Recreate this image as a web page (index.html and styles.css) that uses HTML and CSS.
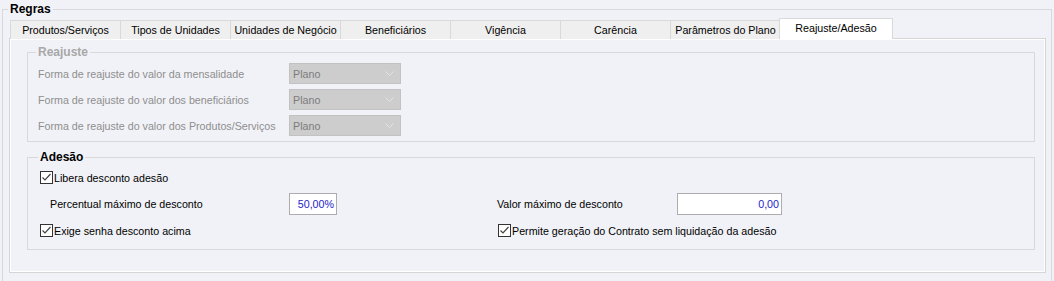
FILE: index.html
```html
<!DOCTYPE html>
<html lang="pt">
<head>
<meta charset="utf-8">
<title>Regras</title>
<link rel="stylesheet" href="styles.css">
</head>
<body>
<fieldset class="group outer">
  <legend class="legend">Regras</legend>
  <div class="tabs">
    <div class="tab">Produtos/Serviços</div>
    <div class="tab">Tipos de Unidades</div>
    <div class="tab">Unidades de Negócio</div>
    <div class="tab">Beneficiários</div>
    <div class="tab">Vigência</div>
    <div class="tab">Carência</div>
    <div class="tab">Parâmetros do Plano</div>
    <div class="tab tab-active">Reajuste/Adesão</div>
  </div>
  <div class="panel">
    <fieldset class="group reajuste">
      <legend class="legend">Reajuste</legend>
      <div class="row">
        <span class="label-col">Forma de reajuste do valor da mensalidade</span>
        <div class="combo"><span>Plano</span><svg class="chev" width="9" height="6" viewBox="0 0 9 6"><path d="M0.5 0.5 L4.5 4.5 L8.5 0.5" fill="none" stroke="#e4e4e4" stroke-width="1"/></svg></div>
      </div>
      <div class="row">
        <span class="label-col">Forma de reajuste do valor dos beneficiários</span>
        <div class="combo"><span>Plano</span><svg class="chev" width="9" height="6" viewBox="0 0 9 6"><path d="M0.5 0.5 L4.5 4.5 L8.5 0.5" fill="none" stroke="#e4e4e4" stroke-width="1"/></svg></div>
      </div>
      <div class="row">
        <span class="label-col">Forma de reajuste do valor dos Produtos/Serviços</span>
        <div class="combo"><span>Plano</span><svg class="chev" width="9" height="6" viewBox="0 0 9 6"><path d="M0.5 0.5 L4.5 4.5 L8.5 0.5" fill="none" stroke="#e4e4e4" stroke-width="1"/></svg></div>
      </div>
    </fieldset>
    <fieldset class="group adesao">
      <legend class="legend">Adesão</legend>
      <div class="grid">
        <label class="check span2">
          <svg class="box" width="13" height="13" viewBox="0 0 13 13"><rect x="0.5" y="0.5" width="12" height="12" fill="#fff" stroke="#333"/><path d="M2.5 6.5 L5 9 L10.5 3" fill="none" stroke="#444" stroke-width="1.2"/></svg>
          <span>Libera desconto adesão</span>
        </label>
        <div class="field left">
          <span class="flabel">Percentual máximo de desconto</span>
          <div class="input pct">50,00%</div>
        </div>
        <div class="field right">
          <span class="flabel wide">Valor máximo de desconto</span>
          <div class="input val">0,00</div>
        </div>
        <label class="check">
          <svg class="box" width="13" height="13" viewBox="0 0 13 13"><rect x="0.5" y="0.5" width="12" height="12" fill="#fff" stroke="#333"/><path d="M2.5 6.5 L5 9 L10.5 3" fill="none" stroke="#444" stroke-width="1.2"/></svg>
          <span>Exige senha desconto acima</span>
        </label>
        <label class="check right-check">
          <svg class="box" width="13" height="13" viewBox="0 0 13 13"><rect x="0.5" y="0.5" width="12" height="12" fill="#fff" stroke="#333"/><path d="M2.5 6.5 L5 9 L10.5 3" fill="none" stroke="#444" stroke-width="1.2"/></svg>
          <span>Permite geração do Contrato sem liquidação da adesão</span>
        </label>
      </div>
    </fieldset>
  </div>
</fieldset>
</body>
</html>
```

FILE: styles.css
```css
html, body {
  margin: 0;
  padding: 0;
  background: #f1f2f7;
  overflow: hidden;
}
body {
  width: 1054px;
  height: 281px;
  font-family: "Liberation Sans", Arial, sans-serif;
  font-size: 10.7px;
  color: #000;
}
.group {
  margin: 0;
  border: 1px solid #d9d9dc;
  min-width: 0;
}
.legend {
  font-weight: bold;
  font-size: 12px;
  line-height: 14px;
  padding: 0 2px;
  margin-left: -2px;
}
.outer {
  margin: 0 2px;
  padding: 1px 5px 12px 6px;
}
.outer > .legend {
  line-height: 18px;
  margin-left: -1px;
}
.tabs {
  display: flex;
  align-items: flex-end;
  height: 20px;
  padding-left: 1px;
  position: relative;
  z-index: 1;
}
.tab {
  box-sizing: border-box;
  width: 110px;
  height: 19px;
  border: 1px solid #d9d9d9;
  border-right: none;
  border-bottom: none;
  background: #efefef;
  text-align: center;
  line-height: 19px;
  white-space: nowrap;
}
.tab-active {
  width: 114px;
  height: 21px;
  margin-left: -1px;
  background: #fff;
  border-right: 1px solid #d9d9d9;
  line-height: 19px;
}
.panel {
  box-sizing: border-box;
  height: 235px;
  margin-top: -1px;
  border: 1px solid #d6d6d6;
  box-shadow: inset 0 0 0 1px #fff;
  padding: 6px 10px 0 17px;
}
.reajuste {
  padding: 4px 10px 5px 10px;
  color: #8e8e8e;
}
.reajuste .legend {
  color: #a8a8a8;
}
.row {
  display: flex;
  align-items: center;
  height: 21px;
  margin-bottom: 5px;
}
.row:last-of-type {
  margin-bottom: 0;
}
.label-col {
  width: 251px;
  white-space: nowrap;
}
.combo {
  box-sizing: border-box;
  width: 112px;
  height: 21px;
  background: #cdcdcd;
  border: 1px solid #c2c2c2;
  display: flex;
  align-items: center;
  justify-content: space-between;
  padding: 0 6px 0 3px;
  color: #7c7c7c;
}
.adesao {
  margin-top: 8px;
  padding: 6px 10px 11px 12px;
}
.grid {
  display: grid;
  grid-template-columns: 457px 1fr;
  row-gap: 8px;
}
.span2 {
  grid-column: 1 / 3;
}
.check {
  display: flex;
  align-items: center;
  height: 15px;
  white-space: nowrap;
}
.box {
  flex: none;
  margin-right: 1px;
}
.right-check {
  margin-left: 1px;
}
.field {
  display: flex;
  align-items: center;
  height: 22px;
}
.field.left {
  padding-left: 10px;
}
.flabel {
  width: 239px;
  white-space: nowrap;
}
.flabel.wide {
  width: 180px;
}
.input {
  box-sizing: border-box;
  height: 22px;
  background: #fff;
  border: 1px solid #adadad;
  color: #2424c8;
  text-align: right;
  line-height: 20px;
  padding-right: 2px;
}
.pct {
  width: 48px;
}
.val {
  width: 105px;
}
```
